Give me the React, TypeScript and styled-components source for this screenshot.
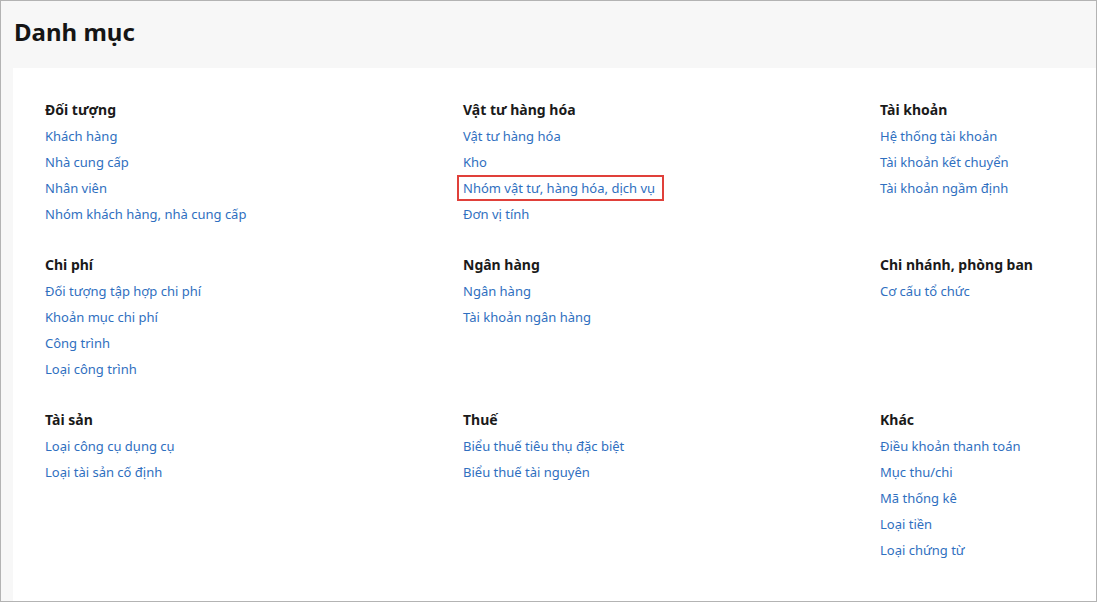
import React, { FC } from 'react';
import styled, { createGlobalStyle } from 'styled-components';

const GlobalStyle = createGlobalStyle`
  html, body {
    margin: 0;
    padding: 0;
    background: #ffffff;
  }
  body {
    font-family: 'Noto Sans', 'Open Sans', sans-serif;
  }
`;

const Frame = styled.div`
  box-sizing: border-box;
  width: 1097px;
  height: 602px;
  border: 1px solid #b3b3b3;
  background: #f7f7f7;
  display: flex;
  flex-direction: column;
  overflow: hidden;
`;

const Header = styled.div`
  height: 67px;
  padding-left: 13px;
  display: flex;
  align-items: flex-start;
`;

const Title = styled.h1`
  margin: 0;
  padding-top: 14px;
  font-size: 24px;
  line-height: 34px;
  font-weight: 700;
  color: #151515;
`;

const Panel = styled.div`
  flex: 1;
  margin-left: 12px;
  background: #ffffff;
  padding: 29px 0 0 32px;
  display: grid;
  grid-template-columns: 418px 417px 1fr;
  align-content: start;
`;

const Group = styled.div`
  display: flex;
  flex-direction: column;
  align-items: flex-start;
  margin-bottom: 25px;
`;

const GroupTitle = styled.div`
  font-size: 14px;
  line-height: 26px;
  font-weight: 700;
  color: #1a1a1a;
`;

const Link = styled.a<{ $highlight?: boolean }>`
  display: inline-block;
  font-size: 13px;
  line-height: ${(p) => (p.$highlight ? '22px' : '26px')};
  color: #2f6fc0;
  text-decoration: none;
  cursor: pointer;
  ${(p) =>
    p.$highlight &&
    `
    margin-left: -6px;
    padding: 0 7px 0 4px;
    border: 2px solid #e0403a;
  `}
`;

type Section = { title: string; items: string[]; highlight?: string };

const sections: Section[] = [
  { title: 'Đối tượng', items: ['Khách hàng', 'Nhà cung cấp', 'Nhân viên', 'Nhóm khách hàng, nhà cung cấp'] },
  {
    title: 'Vật tư hàng hóa',
    items: ['Vật tư hàng hóa', 'Kho', 'Nhóm vật tư, hàng hóa, dịch vụ', 'Đơn vị tính'],
    highlight: 'Nhóm vật tư, hàng hóa, dịch vụ',
  },
  { title: 'Tài khoản', items: ['Hệ thống tài khoản', 'Tài khoản kết chuyển', 'Tài khoản ngầm định'] },
  { title: 'Chi phí', items: ['Đối tượng tập hợp chi phí', 'Khoản mục chi phí', 'Công trình', 'Loại công trình'] },
  { title: 'Ngân hàng', items: ['Ngân hàng', 'Tài khoản ngân hàng'] },
  { title: 'Chi nhánh, phòng ban', items: ['Cơ cấu tổ chức'] },
  { title: 'Tài sản', items: ['Loại công cụ dụng cụ', 'Loại tài sản cố định'] },
  { title: 'Thuế', items: ['Biểu thuế tiêu thụ đặc biệt', 'Biểu thuế tài nguyên'] },
  { title: 'Khác', items: ['Điều khoản thanh toán', 'Mục thu/chi', 'Mã thống kê', 'Loại tiền', 'Loại chứng từ'] },
];

const App: FC = () => {
  return (
    <>
      <GlobalStyle />
      <Frame>
        <Header>
          <Title>Danh mục</Title>
        </Header>
        <Panel>
          {sections.map((s) => (
            <Group key={s.title}>
              <GroupTitle>{s.title}</GroupTitle>
              {s.items.map((item) => (
                <Link key={item} $highlight={item === s.highlight}>
                  {item}
                </Link>
              ))}
            </Group>
          ))}
        </Panel>
      </Frame>
    </>
  );
};

export default App;
